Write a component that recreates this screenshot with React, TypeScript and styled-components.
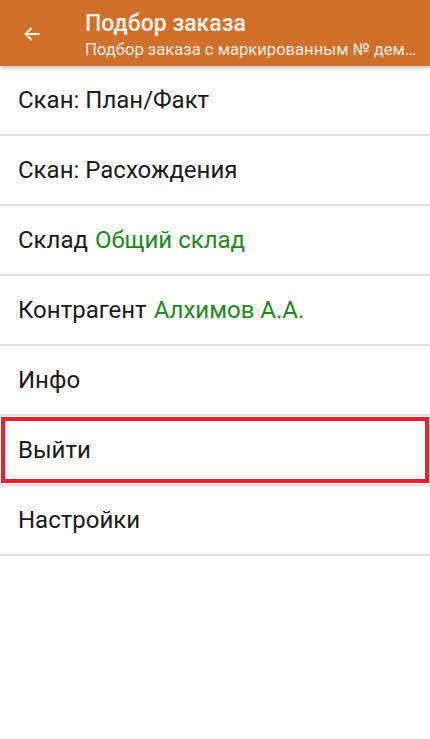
import React from 'react';
import styled, { createGlobalStyle } from 'styled-components';

const GlobalStyle = createGlobalStyle`
  html, body {
    margin: 0;
    padding: 0;
    background: #ffffff;
  }
  body {
    font-family: Roboto, "Noto Sans", sans-serif;
  }
`;

const Screen = styled.div`
  width: 430px;
  min-height: 739px;
  background: #ffffff;
`;

const Header = styled.header`
  height: 66px;
  background: #d0702a;
  display: flex;
  align-items: flex-start;
  box-shadow: 0 2px 4px rgba(0, 0, 0, 0.25);
  position: relative;
  z-index: 1;
`;

const BackButton = styled.button`
  width: 64px;
  height: 66px;
  padding: 2px 0 0 21px;
  border: none;
  background: transparent;
  color: #ffffff;
  display: flex;
  align-items: center;
  flex-shrink: 0;
`;

const Titles = styled.div`
  display: flex;
  flex-direction: column;
  min-width: 0;
  flex: 1;
  padding: 10px 11px 0 21px;
  color: #ffffff;
`;

const Title = styled.div`
  font-size: 23px;
  font-weight: 500;
  line-height: 28px;
  color: #f6f0ea;
`;

const Subtitle = styled.div`
  font-size: 16.6px;
  line-height: 24px;
  white-space: nowrap;
  overflow: hidden;
  text-overflow: ellipsis;
  color: #f8ede2;
`;

const Menu = styled.ul`
  list-style: none;
  margin: 0;
  padding: 0;
`;

const Item = styled.li<{ $highlight?: boolean }>`
  position: relative;
  height: 68px;
  display: flex;
  align-items: center;
  padding: 0 18px;
  font-size: 24px;
  color: #1a1a1a;
  border-bottom: 2px solid #e2e2e2;

  ${({ $highlight }) =>
    $highlight &&
    `
    &::after {
      content: '';
      position: absolute;
      inset: 1px 1px 1px 1px;
      border: 4px solid #ee1d2b;
    }
  `}
`;

const Value = styled.span`
  color: #1b8a1b;
  margin-left: 7px;
`;

const items: { label: string; value?: string; highlight?: boolean }[] = [
  { label: 'Скан: План/Факт' },
  { label: 'Скан: Расхождения' },
  { label: 'Склад', value: 'Общий склад' },
  { label: 'Контрагент', value: 'Алхимов А.А.' },
  { label: 'Инфо' },
  { label: 'Выйти', highlight: true },
  { label: 'Настройки' },
];

export default function App() {
  return (
    <Screen>
      <GlobalStyle />
      <Header>
        <BackButton aria-label="Назад">
          <svg width="22" height="22" viewBox="0 0 24 24" fill="none">
            <path
              d="M20 12H5M11.5 5.5 5 12l6.5 6.5"
              stroke="#ffffff"
              strokeWidth="2.2"
            />
          </svg>
        </BackButton>
        <Titles>
          <Title>Подбор заказа</Title>
          <Subtitle>Подбор заказа с маркированным № демонстрационный</Subtitle>
        </Titles>
      </Header>
      <Menu>
        {items.map((it) => (
          <Item key={it.label} $highlight={it.highlight}>
            {it.label}
            {it.value && <Value>{it.value}</Value>}
          </Item>
        ))}
      </Menu>
    </Screen>
  );
}
